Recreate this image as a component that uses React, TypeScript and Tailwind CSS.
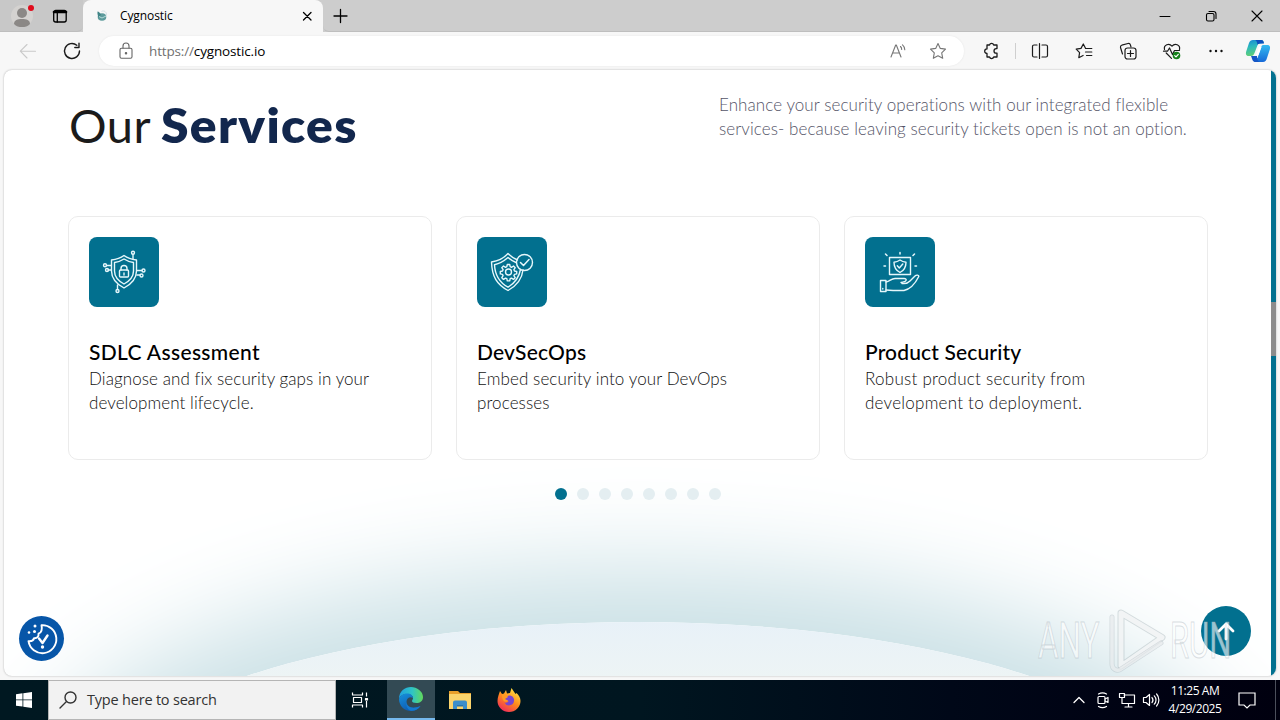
import type { ReactNode } from 'react';

interface IconProps {
  size?: number;
  className?: string;
  width?: number;
  children: ReactNode;
}

const Icon: React.FC<IconProps> = ({ size = 20, width = 1.1, className = '', children }) => (
  <svg
    width={size}
    height={size}
    viewBox={`0 0 ${size} ${size}`}
    fill="none"
    stroke="currentColor"
    strokeWidth={width}
    strokeLinecap="round"
    strokeLinejoin="round"
    className={`shrink-0 ${className}`}
  >
    {children}
  </svg>
);

const ToolButton: React.FC<{ children: ReactNode }> = ({ children }) => (
  <div className="flex w-11 shrink-0 items-center justify-center">{children}</div>
);

const TabBar: React.FC = () => (
  <div className="flex h-8 bg-[#cdcdcd] text-black">
    <div className="flex w-[83px] rounded-br-md bg-[#c8c8c8] border-b border-[#bebebe]">
      <svg width="46" height="31" viewBox="0 0 46 31" className="shrink-0">
        <circle cx="22" cy="16" r="11" fill="#d4d2d0" />
        <circle cx="22" cy="13" r="5" fill="#8b8886" />
        <path d="M14 24c0-4 3.500-5 8-5s8 1 8 5c-2 2.500-5 3-8 3s-6-.5-8-3z" fill="#8b8886" />
        <circle cx="31" cy="8" r="3" fill="#e00b1c" />
      </svg>
      <Icon size={16} width={1.3} className="mt-2 ml-[6px]">
        <rect x="1.700" y="2.500" width="12.500" height="11.500" rx="2" />
        <path d="M2 4h12" strokeWidth="2.600" />
        <path d="M5.300 4v10" />
      </Icon>
    </div>
    <div className="flex w-[240px] items-center rounded-t-lg bg-[#f7f7f7]">
      <svg width="14" height="14" viewBox="0 0 14 14" className="ml-3 shrink-0">
        <ellipse cx="7" cy="8" rx="4.300" ry="3.800" fill="#5d9b9c" />
        <path d="M2.500 2.500c1.500 0 2.500 1.500 3.500 3L4 9C2.700 7 2.300 4.800 2.500 2.500z" fill="#3f8486" />
        <path d="M6.500 2.500c2.500-1.500 5.500.5 5 4" stroke="#cfe0e3" fill="none" />
        <path d="M4 7.500l3 1.500 4-2" stroke="#b7dcda" fill="none" />
      </svg>
      <span className="ml-[11px] w-[181px] text-[12px] leading-4 tracking-[-0.100px]">Cygnostic</span>
      <Icon size={12} width={1.3}><path d="M2.500 2.500l7.500 7.500M10 2.500L2.500 10" /></Icon>
    </div>
    <div className="flex flex-1 items-center rounded-bl-md border-b border-[#bebebe] pl-2">
      <Icon size={18} width={1.300}><path d="M9.500 2.500v13M3 9h13" /></Icon>
      <div className="flex-1" />
      <Icon size={12} width={1} className="mr-[34px]"><path d="M1 6.500h10" /></Icon>
      <Icon size={12} width={1.1} className="mr-[34px]">
        <rect x="1.500" y="3.500" width="7.500" height="7.500" rx="1.500" />
        <path d="M4 1.500h4.500a2.500 2.500 0 0 1 2.500 2.500v4.500" />
      </Icon>
      <Icon size={12} width={1.1} className="mr-[17px]"><path d="M1 1l10 10M11 1L1 11" /></Icon>
    </div>
  </div>
);

const Copilot: React.FC = () => (
  <svg width="26" height="26" viewBox="0 0 26 26" className="ml-[7px] shrink-0">
    <defs>
      <linearGradient id="cpA" x1="0" y1="0" x2="0.200" y2="1">
        <stop offset="0" stopColor="#1688d4" />
        <stop offset="0.450" stopColor="#2bb9bd" />
        <stop offset="1" stopColor="#5fce78" />
      </linearGradient>
      <linearGradient id="cpB" x1="0" y1="0" x2="0" y2="1">
        <stop offset="0" stopColor="#34bbf0" />
        <stop offset="1" stopColor="#1669d8" />
      </linearGradient>
    </defs>
    <path d="M8 2h8c2 0 2.500 1 3 3l-6 1-3.500 9c-.8 2-1.500 3-3.500 3H4c-3 0-3.500-2-2.800-4.500L4 5c.7-2 2-3 4-3z" fill="url(#cpA)" />
    <path d="M10 2h6c2 0 2.500 1 3 3.500h-3c-2 0-3 .5-3.500 1.500C12 4 11.500 2.500 10 2z" fill="#0c4fbd" />
    <path d="M18 7h4c3 0 3.500 2 2.800 4.500L22 20c-.7 2.500-2 4-4 4h-7c-2 0-3-1.500-3.500-4l5 0 3.500-10c.5-2 1-3 2-3z" fill="url(#cpB)" />
    <path d="M6 18h5l1 0c0 4 1 5.500 3 6h-5c-2.500 0-3-4-4-6z" fill="#1556c5" />
    <path d="M14 9h2.500L13.500 17H11z" fill="#fff" />
  </svg>
);

const Toolbar: React.FC = () => (
  <div className="flex h-[38px] items-center bg-[#f7f7f7] text-[#1b1b1b]">
    <Icon className="ml-[18px] text-[#c9c9c9]"><path d="M2.500 10.200h15M9 3.500l-6.700 6.700L9 17" /></Icon>
    <Icon width={1.4} className="ml-6 mr-[17px]">
      <path d="M17.500 10a7.500 7.500 0 1 1-2.700-5.800M17 2.300v4.200h-4.200" />
    </Icon>
    <div className="flex h-[30px] w-[865px] items-center rounded-full bg-white shadow-[0_0_2px_#e4e4e4]">
      <Icon size={18} className="ml-[18px] text-[#666]">
        <rect x="3" y="6.300" width="12" height="10" rx="1.500" />
        <path d="M6 6V4a3 3 0 0 1 6 0v2" />
        <circle cx="9" cy="11.300" r=".7" fill="currentColor" />
      </Icon>
      <span className="ml-[14px] flex-1 text-[13.500px] tracking-[-0.150px] text-black">
        <span className="text-[#707070]">https://</span>cygnostic.io
      </span>
      <Icon width={1.1} className="mr-5 text-[#767676]">
        <path d="M3 16l4.700-12h.6L13 16M4.600 12h6.800M12.500 5.500a4 4 0 0 1 1.200 3M14.500 3.800a6.500 6.500 0 0 1 2.300 5" />
      </Icon>
      <Icon className="mr-4 text-[#767676]">
        <path d="M10 2.500l2.300 4.900 5.200.7-3.800 3.700 1 5.500-4.700-2.600-4.700 2.600 1-5.500L2.500 8.100l5.200-.7z" />
      </Icon>
    </div>
    <div className="ml-[5px] flex">
      <ToolButton>
        <Icon width={1.300}>
          <path d="M6 4h2.500a2.200 2.200 0 0 1 4.200 0h3.300v3.600h-.7a2.300 2.300 0 0 0 0 4.600h.7V16h-3.300a2.200 2.200 0 0 1-4.200 0H6v-3.500a2.300 2.300 0 0 1 0-4.600z" />
        </Icon>
      </ToolButton>
    </div>
    <div className="mx-[2px] h-4 w-px bg-[#cfcfcf]" />
    <ToolButton>
      <Icon width={1.200}>
        <path d="M7 4H4a1.500 1.500 0 0 0-1.500 1.500v9A1.500 1.500 0 0 0 4 16h3M12 4h4a1.500 1.500 0 0 1 1.500 1.500v9A1.500 1.500 0 0 1 16 16h-4M9.500 2.500v15" />
      </Icon>
    </ToolButton>
    <ToolButton>
      <Icon width={1.200}>
        <path d="M11.500 7.300L9.300 3 7 7.400l-4.800.8 3.400 3.500-.8 5 4.300-2.200M11.500 7.500h6.300M11.500 11h6.300M12.500 14.500h5.300" />
      </Icon>
    </ToolButton>
    <ToolButton>
      <Icon width={1.200}>
        <path d="M4.500 13L2.500 6.500A2 2 0 0 1 3.800 4.200L10 2.500a2 2 0 0 1 2.400 1.400L13 6" />
        <rect x="7" y="7" width="11" height="11" rx="2.500" />
        <path d="M12.500 9.500v6M9.500 12.500h6" />
      </Icon>
    </ToolButton>
    <ToolButton>
      <Icon width={1.200}>
        <path d="M2.500 8.500c-1-4.500 4.500-7 7.500-3.300C13 1.500 18.500 4 17.500 8.500M4.200 12l5.300 5.300M1.500 10.200h4L7.500 7l3 6.500 2-4h5" />
        <circle cx="14.500" cy="14.500" r="3.800" fill="#15811a" stroke="none" />
        <path d="M12.700 14.600l1.300 1.300 2.300-2.500" stroke="#fff" />
      </Icon>
    </ToolButton>
    <ToolButton>
      <Icon>
        <g fill="#111" stroke="none"><circle cx="4.500" cy="10" r="1.200" /><circle cx="10" cy="10" r="1.200" /><circle cx="15.500" cy="10" r="1.200" /></g>
      </Icon>
    </ToolButton>
    <Copilot />
  </div>
);

const ShieldLock: React.FC = () => (
  <>
    <path d="M35 18.500c4 3 8 4 12.500 4.500v11c0 8-5 13-12.500 17-7.500-4-12.500-9-12.500-17V23c4.500-.5 8.500-1.500 12.500-4.500z" />
    <path d="M35 22c3 2 6 3 9.500 3.500V34c0 6-4 10-9.500 13-5.500-3-9.500-7-9.500-13v-8.500C29 25 32 24 35 22z" />
    <rect x="30.500" y="33" width="9" height="7" rx="1" />
    <path d="M32 33v-1.500a3 3 0 0 1 6 0V33M35 36v2" />
    <path d="M44 22v-4.500M22 28.500h-4.500M22 33h-3M48 33.500h5M48 38h3M28.500 48v4.500" />
    <circle cx="44" cy="15.800" r="1.500" />
    <circle cx="16" cy="28.300" r="1.500" />
    <circle cx="18" cy="33" r="1.500" />
    <circle cx="54.500" cy="33.500" r="1.500" />
    <circle cx="52.500" cy="38.500" r="1.500" />
    <circle cx="28.500" cy="54" r="1.500" />
  </>
);

const ShieldGear: React.FC = () => (
  <>
    <path d="M46 33c-1 9-6 15.500-15 20.500C20 47.500 15 40 14.500 25 21 24 27 21 31 16.500c3 3 6 5.200 9.500 6.500" />
    <path d="M43.500 32.500C42 40.500 38 46 31 50.200c-9-5-13-12-13.500-22.500C23 26.500 27 24 31 20.500c2.500 2 5 3.800 8 5" />
    <circle cx="47.500" cy="25.500" r="8" />
    <path d="M43.500 25.500l3 3 5.500-6" strokeWidth="1.500" />
    <circle cx="31.500" cy="35" r="3" />
    <path d="M30.300 27.500h2.400l.5 2.200 1.300.6 2-1.300 1.700 1.700-1.300 2 .6 1.300 2.200.5v2.400l-2.200.5-.6 1.300 1.300 2-1.700 1.700-2-1.300-1.300.6-.5 2.200h-2.400l-.5-2.200-1.300-.6-2 1.300-1.700-1.700 1.300-2-.6-1.300-2.200-.5v-2.400l2.200-.5.600-1.300-1.300-2 1.700-1.700 2 1.300 1.300-.6z" />
  </>
);

const HandBox: React.FC = () => (
  <>
    <rect x="24.500" y="20.500" width="21" height="17" />
    <path d="M35 23c2 1.500 3.500 2 6 2.200 0 5-1.500 8-6 10.300-4.500-2.300-6-5.300-6-10.300 2.500-.2 4-.7 6-2.200z" />
    <path d="M32.300 28.700l2 2.300 3.500-4" />
    <path d="M35 15.500V17M20.500 17l1.500 1.500M49.500 17L48 18.500M19 29h1.500M50 29h1.500" strokeWidth="1.500" />
    <path d="M15.500 43.500h5.500v11h-5.500zM17.800 51.500v.5" />
    <path d="M21 45c4-.5 5-3.500 9-3.500h9c2 0 2.500 1 2 2-.5 1.200-2 1.500-5 2M37 46.500c4 .5 6-.3 8-2.500l5-5c1.500-1.500 4-1 3.800.5C50 47 46 52 39 53.500H28l-7-.5" />
  </>
);

const services = [
  {
    title: 'SDLC Assessment', titleSpacing: 'tracking-[0.340px]', textSpacing: 'tracking-[0.080px]', icon: <ShieldLock />,
    lines: ['Diagnose and fix security gaps in your', 'development lifecycle.'],
  },
  {
    title: 'DevSecOps', titleSpacing: 'tracking-[0.200px]', textSpacing: 'tracking-[0.100px]', icon: <ShieldGear />,
    lines: ['Embed security into your DevOps', 'processes'],
  },
  {
    title: 'Product Security', titleSpacing: 'tracking-[0.150px]', textSpacing: 'tracking-[0.250px]', icon: <HandBox />,
    lines: ['Robust product security from', 'development to deployment.'],
  },
];

const ServicesPage: React.FC = () => (
  <div className="relative mx-1 h-[606px] overflow-hidden rounded-lg bg-white font-['Lato',sans-serif] shadow-[0_0_2px_#aaa]">
    {/* big ellipse with its glow, cut off by the page bottom */}
    <div className="absolute top-[552px] left-[84px] h-[364px] w-[1100px] rounded-[50%] bg-linear-to-b from-[#e8f1f8] to-[#edf4f5] to-15% shadow-[0_0_100px_55px_#cbe1e6]" />

    <div className="relative flex h-[146px] pl-[65px]">
      <h2 className="flex w-[650px] pt-[26px] text-[47px] leading-[58px] text-[#1b1b1b]">
        <span className="w-[92px] tracking-[0.500px]">Our</span>
        <b className="origin-left scale-x-[1.060] font-extrabold tracking-[1.200px] text-[#12274d]">Services</b>
      </h2>
      <p className="pt-[23px] text-[17px] leading-6 font-light tracking-[0.080px] whitespace-nowrap text-[#555568]">
        Enhance your security operations with our integrated flexible<br />
        services- because leaving security tickets open is not an option.
      </p>
    </div>

    <div className="relative mx-16 grid w-[1140px] grid-cols-3 gap-6">
      {services.map((s) => (
        <div key={s.title} className="h-[244px] rounded-[10px] border border-[#ebebeb] bg-white p-5">
          <div className="h-[70px] w-[70px] rounded-lg bg-[#02708f] text-[#e6f7fb]">
            <Icon size={70} width={1.4}>{s.icon}</Icon>
          </div>
          <h3 className={`mt-[31px] mb-px text-[21px] leading-7 font-medium text-black ${s.titleSpacing}`}>{s.title}</h3>
          <p className={`text-[17px] leading-6 font-light whitespace-nowrap text-[#111] ${s.textSpacing}`}>
            {s.lines[0]}<br />{s.lines[1]}
          </p>
        </div>
      ))}
    </div>

    <div className="relative mt-7 ml-[551px] flex gap-[10px]">
      <span className="h-3 w-3 rounded-full bg-[#02708f]" />
      {[1, 2, 3, 4, 5, 6, 7].map((n) => (
        <span key={n} className="h-3 w-3 rounded-full bg-[#e4eef1]" />
      ))}
    </div>

    <div className="absolute bottom-[15px] left-[15px] h-[45px] w-[45px] rounded-full bg-[#0756a8] text-white">
      <Icon size={45} width={1.9}>
        <path d="M22.500 9.200a14 14 0 1 1-13 16c3 .3 5-.8 5.500-3 3 .3 5-1.500 4.500-4.500 2.500-1 4-4 3-8.500z" />
        <path d="M20 22.500l3.500 4.500 5-7.500" strokeWidth="2.400" />
        <g fill="currentColor" stroke="none"><circle cx="16" cy="10" r="1.500" /><circle cx="10" cy="16.500" r="1.300" /><circle cx="15.500" cy="15.500" r="1.500" /><circle cx="23.500" cy="31" r="1.700" /></g>
      </Icon>
    </div>

    <div className="absolute right-[25px] bottom-5 flex h-[50px] w-[50px] items-center justify-center rounded-full bg-[#02708f] text-white">
      <Icon size={22} width={2.800}><path d="M11 19V4M4 11l7-7 7 7" /></Icon>
    </div>

    <div className="absolute top-0 right-0 h-full w-[5px] bg-[#02708f]">
      <div className="mt-[232px] h-[54px] bg-[#8c8c8c]" />
    </div>
  </div>
);

const Watermark: React.FC = () => (
  <div className="absolute top-[606px] left-[1038px] flex h-[68px] w-[196px] items-center font-['Roboto',sans-serif] text-[50px] leading-[68px] font-normal text-white/60 [-webkit-text-stroke:1px_rgba(160,172,180,0.4)]">
    <div className="w-[70px] shrink-0"><span className="inline-block origin-left scale-x-[0.630] pt-[2px]">ANY</span></div>
    <svg width="62" height="68" viewBox="0 0 62 68" className="shrink-0" fill="none" strokeLinejoin="round" strokeLinecap="round">
      <path d="M13 7L54 31.500 13 60z" stroke="#a9b5bb" strokeOpacity=".45" strokeWidth="7" />
      <path d="M13 7L54 31.500 13 60z" stroke="#fff" strokeOpacity=".7" strokeWidth="5" />
      <path d="M4 11v47c0 5 5 8 9 5l40-26" stroke="#a9b5bb" strokeOpacity=".4" strokeWidth="5" />
      <path d="M4 11v47c0 5 5 8 9 5l40-26" stroke="#fff" strokeOpacity=".5" strokeWidth="3.500" />
    </svg>
    <div className="w-[64px] shrink-0"><span className="inline-block origin-left scale-x-[0.620] pt-[2px]">RUN</span></div>
  </div>
);

const EdgeLogo: React.FC = () => (
  <svg width="26" height="26" viewBox="0 0 26 26">
    <defs>
      <linearGradient id="edgeTop" x1="0" y1="0.500" x2="1" y2="0.500">
        <stop offset="0" stopColor="#209fe0" />
        <stop offset="0.550" stopColor="#2fc4c5" />
        <stop offset="1" stopColor="#62d95b" />
      </linearGradient>
      <linearGradient id="edgeLow" x1="0" y1="0" x2="0.600" y2="1">
        <stop offset="0" stopColor="#1690dc" />
        <stop offset="1" stopColor="#0e58ae" />
      </linearGradient>
    </defs>
    <path d="M1 13C1 5 7 1 13 1s12 4.500 12 10c0 4-3 6-6.500 6-3 0-4.500-1-4.500-2 0-.8 1-1.300 1-3C15 9.500 12 8 9 8c-4 0-7 2-8 5z" fill="url(#edgeTop)" />
    <path d="M1 13c1-3 4-5.500 8-5.500 3.500 0 6 2 6 4.500-3-2-6.500 0-6.500 4 0 5 6 7.500 14 4-2 3-5.500 5-9.500 5C6 25 1 19.500 1 13z" fill="url(#edgeLow)" />
    <path d="M8.500 16c0 5 6 7.500 14 4-3 4.500-8 5.500-10.500 4.500C9 23 7.500 18.500 8.500 16z" fill="#1479cf" />
  </svg>
);

const FolderLogo: React.FC = () => (
  <svg width="24" height="22" viewBox="0 0 24 22">
    <path d="M1 2h9l2 2h11v16H1z" fill="#e9a02b" />
    <path d="M1 5h22v15H1z" fill="#fbd46c" />
    <path d="M5 13.500a2 2 0 0 1 2-2h10a2 2 0 0 1 2 2V20h-4v-4H9v4H5z" fill="#3b8ecb" />
    <path d="M9 16h6v1.500H9z" fill="#2b75aa" />
  </svg>
);

const FirefoxLogo: React.FC = () => (
  <svg width="24" height="26" viewBox="0 0 24 26">
    <defs>
      <linearGradient id="fx" x1="0.800" y1="0" x2="0.200" y2="1">
        <stop offset="0" stopColor="#ffe945" />
        <stop offset="0.500" stopColor="#ff8a1c" />
        <stop offset="1" stopColor="#f0235f" />
      </linearGradient>
    </defs>
    <path d="M3 4l2 3 2-.5L9 3l1 3.500 3-.5 1.500-5 4 6 1-1C22 8 23.500 11 23.500 14A11.500 11 0 0 1 .5 14C.5 10 2 7 3 4z" fill="url(#fx)" />
    <path d="M8 10l4-1.500c4 0 5.500 3 5 5.500a5 5 0 0 1-9.500 1.500c2 .5 3.500 0 4-1.500l-3.500-1z" fill="#7846cf" />
    <path d="M5 8c3-1 5 0 6 2L8 12l3 1.500C9 16 5 15 5 8z" fill="#ff9a24" />
  </svg>
);

const Taskbar: React.FC = () => (
  <div className="flex h-10 items-center bg-linear-to-r from-[#001821] via-[#001620] via-50% to-[#00000f] text-white">
    <div className="flex w-12 justify-center">
      <svg width="16" height="16" viewBox="0 0 16 16" fill="#fff">
        <path d="M0 2.200l6.500-.9v6.200H0zM7.300 1.200L16 0v7.500H7.300zM0 8.300h6.500v6.300L0 13.700zM7.300 8.300H16V16l-8.700-1.200z" />
      </svg>
    </div>
    <div className="flex h-10 w-72 items-center border border-[#b5b5b5] bg-[#f2f2f2] text-[#333]">
      <Icon width={1.400} className="ml-[9px]"><path d="M2 18l6-6" /><circle cx="12.500" cy="7.500" r="5.500" /></Icon>
      <span className="ml-[9px] text-[14.500px] leading-5 tracking-[-0.200px]">Type here to search</span>
    </div>
    <div className="flex w-[51px] justify-center pr-[3px]">
      <Icon size={18} width={1.200}>
        <path d="M1.500 1.500v2.500h10V1.500M1.500 16.500V14h10v2.500M2.500 6.500h8v5h-8zM15.500 1.500v4M15.500 10v6.500" strokeLinecap="butt" />
        <path d="M14.500 7.500h2v1.500h-2z" fill="currentColor" />
      </Icon>
    </div>
    <div className="flex h-10 w-12 items-center justify-center border-b-2 border-[#76b9ed] bg-[#334a54]"><EdgeLogo /></div>
    <div className="flex w-[50px] justify-center"><FolderLogo /></div>
    <div className="flex w-12 justify-center"><FirefoxLogo /></div>
    <div className="flex-1" />
    <Icon size={14} width={1.300}><path d="M2 9.500l5-5 5 5" /></Icon>
    <Icon size={18} width={1.200} className="ml-2">
      <rect x="4" y="5.500" width="7" height="7" rx="1" />
      <path d="M11 8l3-1.500v5L11 10M4.500 3a8 8 0 0 1 8 0M4.500 15.500a8 8 0 0 0 8 0" />
    </Icon>
    <Icon size={18} width={1.200} className="ml-[6px]">
      <path d="M6 4h10.500v8.500H4V9M10.500 12.500V16M7 16h7M1.500 2.500h5v4h-5zM4 6.500V9" />
    </Icon>
    <Icon size={18} width={1.200} className="ml-[6px]">
      <path d="M1.500 6.500h2.500l3.500-3v11l-3.500-3H1.500zM10 6.500a4 4 0 0 1 0 5M12.300 4.800a6 6 0 0 1 0 8.400M14.600 3a9 9 0 0 1 0 12" />
    </Icon>
    <div className="ml-[7px] w-[56px] text-center text-[12px] leading-[18px] tracking-[-0.450px] whitespace-nowrap">
      11:25 AM<br />4/29/2025
    </div>
    <Icon size={20} width={1.200} className="ml-[14px]">
      <path d="M2 3h16v12h-5l-3 3-3-3H2z" strokeLinejoin="miter" />
    </Icon>
    <div className="ml-[18px] h-10 w-[5px] border-l border-[#4b4f5b]" />
  </div>
);

export default function App() {
  return (
    <div className="relative h-[720px] w-[1280px] overflow-hidden bg-[#f7f7f7] font-['Open_Sans','Noto_Sans',sans-serif]">
      <TabBar />
      <Toolbar />
      <ServicesPage />
      <div className="h-1" />
      <Taskbar />
      <Watermark />
    </div>
  );
}
